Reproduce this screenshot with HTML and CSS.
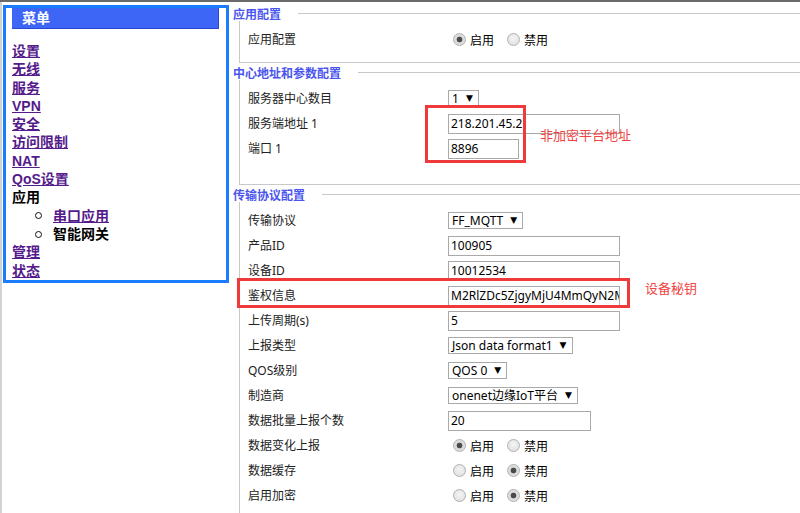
FILE: index.html
```html
<!DOCTYPE html>
<html lang="zh">
<head>
<meta charset="utf-8">
<title>智能网关</title>
<link rel="stylesheet" href="styles.css">
</head>
<body>
<div class="page">
  <div class="side">
    <div class="nav">
      <div class="nav-head">菜单</div>
      <ul class="menu">
        <li><a href="#">设置</a></li>
        <li><a href="#">无线</a></li>
        <li><a href="#">服务</a></li>
        <li><a href="#">VPN</a></li>
        <li><a href="#">安全</a></li>
        <li><a href="#">访问限制</a></li>
        <li><a href="#">NAT</a></li>
        <li><a href="#">QoS设置</a></li>
        <li class="plain">应用</li>
        <li class="sub"><span class="bullet"></span><a href="#">串口应用</a></li>
        <li class="sub plain"><span class="bullet"></span>智能网关</li>
        <li><a href="#">管理</a></li>
        <li><a href="#">状态</a></li>
      </ul>
    </div>
  </div>
  <div class="main">
    <div class="sec-head"><span class="legend">应用配置</span><span class="rule"></span></div>
    <div class="sec-body s1">
      <div class="row"><span class="label">应用配置</span>
        <span class="radios"><span class="radio on"></span><span class="rtxt">启用</span><span class="radio"></span><span class="rtxt">禁用</span></span>
      </div>
    </div>

    <div class="sec-head"><span class="legend">中心地址和参数配置</span><span class="rule"></span></div>
    <div class="sec-body s2">
      <div class="row"><span class="label">服务器中心数目</span><span class="select">1<span class="arrow">▼</span></span></div>
      <div class="row"><span class="label">服务端地址 1</span><span class="input w172">218.201.45.2</span></div>
      <div class="row"><span class="label">端口 1</span><span class="input w71">8896</span></div>
    </div>

    <div class="sec-head h3"><span class="legend">传输协议配置</span><span class="rule"></span></div>
    <div class="sec-body s3">
      <div class="row"><span class="label">传输协议</span><span class="select">FF_MQTT<span class="arrow">▼</span></span></div>
      <div class="row"><span class="label">产品ID</span><span class="input w172">100905</span></div>
      <div class="row"><span class="label">设备ID</span><span class="input w172">10012534</span></div>
      <div class="row"><span class="label">鉴权信息</span><span class="input w172 clip">M2RlZDc5ZjgyMjU4MmQyN2MzNjY4</span></div>
      <div class="row"><span class="label">上传周期(s)</span><span class="input w172">5</span></div>
      <div class="row"><span class="label">上报类型</span><span class="select">Json data format1<span class="arrow">▼</span></span></div>
      <div class="row"><span class="label">QOS级别</span><span class="select">QOS 0<span class="arrow">▼</span></span></div>
      <div class="row"><span class="label">制造商</span><span class="select">onenet边缘IoT平台<span class="arrow">▼</span></span></div>
      <div class="row"><span class="label">数据批量上报个数</span><span class="input w142">20</span></div>
      <div class="row"><span class="label">数据变化上报</span>
        <span class="radios"><span class="radio on"></span><span class="rtxt">启用</span><span class="radio"></span><span class="rtxt">禁用</span></span>
      </div>
      <div class="row"><span class="label">数据缓存</span>
        <span class="radios"><span class="radio"></span><span class="rtxt">启用</span><span class="radio on"></span><span class="rtxt">禁用</span></span>
      </div>
      <div class="row"><span class="label">启用加密</span>
        <span class="radios"><span class="radio"></span><span class="rtxt">启用</span><span class="radio on"></span><span class="rtxt">禁用</span></span>
      </div>
    </div>
  </div>
</div>

<div class="mark mark1"></div>
<div class="note note1">非加密平台地址</div>
<div class="mark mark2"></div>
<div class="note note2">设备秘钥</div>
</body>
</html>
```

FILE: styles.css
```css
html, body {
  margin: 0;
  padding: 0;
  background: #fff;
}
body {
  width: 800px;
  height: 513px;
  overflow: hidden;
  border-top: 2px solid #6a6a6a;
  box-sizing: border-box;
  position: relative;
  font-family: "Noto Sans", "Noto Sans CJK SC", sans-serif;
  color: #222;
}
.page {
  display: flex;
  align-items: flex-start;
}
.side {
  width: 230px;
  flex: none;
  border-left: 2px solid #d2d2d2;
  height: 511px;
}
.nav {
  margin-top: 3px;
  margin-left: 1px;
  width: 220px;
  border: 3px solid #1a7cff;
  padding: 0 0 0 0;
  height: 272px;
}
.nav-head {
  margin-left: 6px;
  width: 206px;
  height: 20px;
  background: #3d65f6;
  border-right: 1px solid #2848d0;
  border-bottom: 1px solid #2848d0;
  color: #fff;
  font: bold 14px/20px "Liberation Sans", "Noto Sans CJK SC", sans-serif;
  padding-left: 10px;
  box-sizing: content-box;
  width: 196px;
}
.menu {
  list-style: none;
  margin: 13px 0 0 0;
  padding: 0 0 0 6px;
  font: bold 14px/18.3px "Liberation Sans", "Noto Sans CJK SC", sans-serif;
}
.menu li {
  height: 18.3px;
}
.menu a {
  color: #551a8b;
  text-decoration: underline;
}
.menu .plain {
  color: #000;
}
.menu .sub {
  display: flex;
  align-items: center;
  padding-left: 23px;
}
.bullet {
  width: 5px;
  height: 5px;
  border: 1px solid #111;
  border-radius: 50%;
  margin-right: 11px;
  flex: none;
}

.main {
  flex: 1;
  padding-top: 4px;
  min-width: 0;
}
.sec-head {
  display: flex;
  align-items: center;
  height: 15px;
  margin-left: 1px;
}
.sec-head + .sec-body {
  margin-top: 0;
}
.sec-body + .sec-head {
  margin-top: 2px;
}
.sec-body + .sec-head.h3 {
  margin-top: 2px;
}
.legend {
  font: bold 12px/15px "Noto Sans CJK SC", sans-serif;
  color: #4a55ee;
}
.rule {
  flex: 1;
  height: 1px;
  background: #c8c8c8;
  margin-left: 17px;
}
.sec-body {
  margin-left: 7px;
  border-left: 1px solid #c8c8c8;
  padding-left: 8px;
  padding-top: 6px;
}
.s1 {
  border-bottom: 1px solid #c8c8c8;
  padding-bottom: 10px;
}
.s2 {
  border-bottom: 1px solid #c8c8c8;
  padding-bottom: 23px;
}
.s3 {
  height: 320px;
}
.row {
  display: flex;
  align-items: center;
  height: 25px;
}
.label {
  width: 200px;
  flex: none;
  font: 12px/16px "Noto Sans", "Noto Sans CJK SC", sans-serif;
  color: #222;
}
.input {
  display: block;
  box-sizing: border-box;
  height: 20px;
  border: 1px solid #a9a9a9;
  font: 12px/18px "Noto Sans", "Noto Sans CJK SC", sans-serif;
  color: #000;
  padding: 0 2px;
  white-space: nowrap;
  overflow: hidden;
  background: #fff;
}
.w172 { width: 172px; }
.w142 { width: 143px; }
.w71 { width: 71px; }
.select {
  display: flex;
  align-items: center;
  box-sizing: border-box;
  height: 17px;
  border: 1px solid #a9a9a9;
  font: 12px/15px "Noto Sans", "Noto Sans CJK SC", sans-serif;
  color: #000;
  padding: 0 5px 0 3px;
  background: #fff;
  white-space: nowrap;
}
.arrow {
  font: 9px/15px "DejaVu Sans", sans-serif;
  margin-left: 7px;
}
.radios {
  display: flex;
  align-items: center;
  margin-left: 5px;
}
.radio {
  width: 13px;
  height: 13px;
  box-sizing: border-box;
  border-radius: 50%;
  border: 1px solid #b0b0b0;
  background: radial-gradient(circle at 50% 40%, #f4f4f4 0, #dcdcdc 100%);
  flex: none;
}
.radio.on {
  background: radial-gradient(circle, #4a4a4a 0, #4a4a4a 2.5px, #d8d8d8 3.2px, #e8e8e8 100%);
}
.rtxt {
  font: 12px/16px "Noto Sans CJK SC", sans-serif;
  color: #000;
  margin-left: 4px;
  margin-right: 13px;
}

.mark {
  position: absolute;
  border: 3px solid #ee3a3a;
  box-sizing: border-box;
}
.mark1 {
  left: 425px;
  top: 103px;
  width: 101px;
  height: 58px;
}
.mark2 {
  left: 237px;
  top: 276px;
  width: 393px;
  height: 30px;
}
.note {
  position: absolute;
  font: 13px/18px "Noto Sans CJK SC", sans-serif;
  color: #f04444;
}
.note1 {
  left: 540px;
  top: 124px;
}
.note2 {
  left: 645px;
  top: 277px;
}
```
